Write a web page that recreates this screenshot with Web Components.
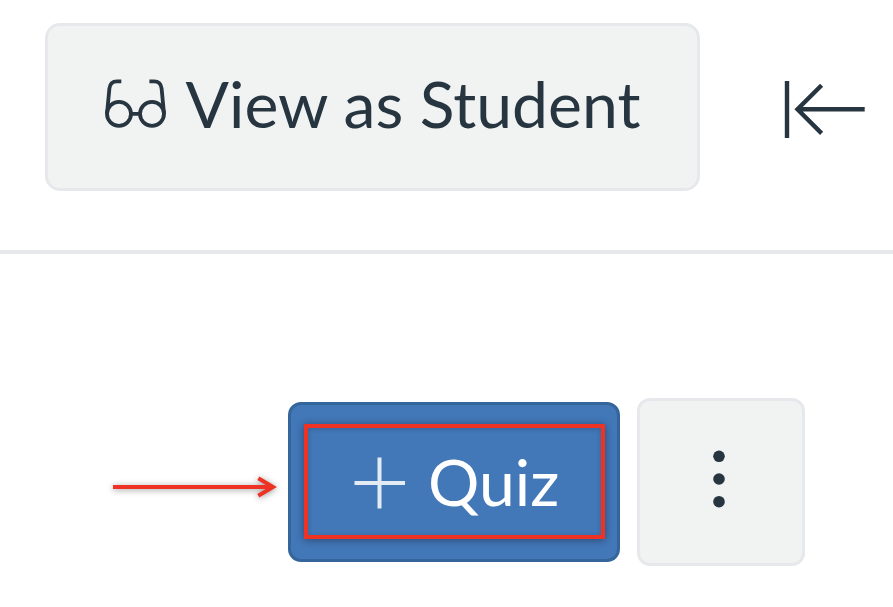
<!DOCTYPE html>
<html lang="en"><head><meta charset="utf-8"><title>Quizzes</title>
<style>html,body{margin:0;height:100%;background:#fff;overflow:hidden}</style></head>
<body><quiz-page></quiz-page>
<script>
const make=(name,html)=>customElements.define(name,class extends HTMLElement{
  constructor(){super();this.attachShadow({mode:'open'}).innerHTML=html;}
});
make('student-button',`<style>
:host{display:flex;align-items:center;box-sizing:border-box;width:655px;height:168px;padding:0 0 7px 57px;border:3px solid #e6e8eb;border-radius:15px;background:#f1f3f3;color:#273540;font:64.25px/80px Lato,sans-serif;white-space:nowrap}
svg{flex:none;width:62px;height:52px;margin:0 18.5px 0 0}
</style><svg viewBox="0 0 62 52" fill="none" stroke="#273540" stroke-width="3.8"><circle cx="14" cy="35.8" r="12"/><circle cx="47" cy="35.8" r="12"/><path d="M2 35.8 4.4 10.5Q5.2 3.4 12 3.4H16.3M59 35.8 56.6 10.5Q55.8 3.4 49 3.4H44.4M26 35.8H35"/></svg><slot></slot>`);
make('collapse-icon',`<style>:host{display:block;width:82px;height:60px}svg{display:block}</style>
<svg width="82" height="60" viewBox="0 0 82 60" fill="none" stroke="#273540" stroke-width="4.4"><path d="M3 1V58M14 29.3H80.7M37.6 5.2 13.5 29.3 37.6 53.4"/></svg>`);
make('top-bar',`<style>:host{display:flex;box-sizing:border-box;height:254px;padding:23px 0 0 45px;border-bottom:4px solid #e6e8eb}collapse-icon{margin:57px 0 0 84px}</style>
<student-button>View as Student</student-button><collapse-icon></collapse-icon>`);
make('pointer-arrow',`<style>:host{display:block;width:176px;height:40px}svg{display:block;overflow:visible;filter:drop-shadow(0 1px 3px #0006)}</style>
<svg width="176" height="40" fill="none" stroke="#ee3224" stroke-width="4"><path d="M5 20H165M150.3 11.3 165 20 150.3 28.7"/></svg>`);
make('quiz-button',`<style>
:host{display:flex;box-sizing:border-box;width:332px;height:160px;padding:19px 12px 20px 13px;border:3px solid #34659b;border-radius:13px;background:#4277b8;color:#fff;font:64.25px/80px Lato,sans-serif}
.mark{display:flex;align-items:center;flex:1;box-sizing:border-box;border:4px solid #ee3224;padding:0 0 0 45px;box-shadow:0 1px 8px #0006,inset 0 1px 5px #0003}
svg{flex:none;width:52px;height:52px;margin:2px 23px 0 0}
</style><div class="mark"><svg viewBox="0 0 52 52" stroke="#e3ebf5" stroke-width="4"><path d="M1.5 26H52M26.5 .5V51.5"/></svg><slot></slot></div>`);
make('more-button',`<style>
:host{display:flex;align-items:center;justify-content:center;box-sizing:border-box;width:168px;height:168px;padding:0 3px 7px 0;border:3px solid #e6e8eb;border-radius:13px;background:#f1f3f3}
</style><svg width="14" height="60" viewBox="0 0 14 60" fill="#273540"><circle cx="7" cy="7.3" r="5.8"/><circle cx="7" cy="30" r="5.8"/><circle cx="7" cy="52.7" r="5.8"/></svg>`);
make('quiz-page',`<style>:host{display:block}.row{display:flex;align-items:flex-start;padding:144px 0 0 108px}pointer-arrow{margin-top:69px}quiz-button{margin:4px 16.5px 0 4px}</style>
<top-bar></top-bar><div class="row"><pointer-arrow></pointer-arrow><quiz-button>Quiz</quiz-button><more-button></more-button></div>`);
</script></body></html>
